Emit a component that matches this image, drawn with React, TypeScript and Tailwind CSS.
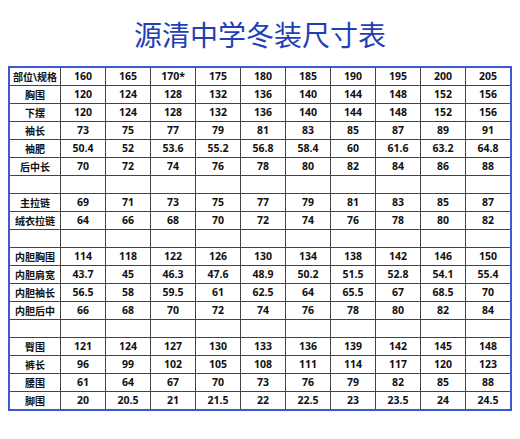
import { Fragment } from "react"

const sizes = ["160", "165", "170*", "175", "180", "185", "190", "195", "200", "205"]

// null = blank spacer row
const rows: (readonly [string, (string | number)[]] | null)[] = [
  ["胸围", [120, 124, 128, 132, 136, 140, 144, 148, 152, 156]],
  ["下摆", [120, 124, 128, 132, 136, 140, 144, 148, 152, 156]],
  ["袖长", [73, 75, 77, 79, 81, 83, 85, 87, 89, 91]],
  ["袖肥", [50.4, 52, 53.6, 55.2, 56.8, 58.4, 60, 61.6, 63.2, 64.8]],
  ["后中长", [70, 72, 74, 76, 78, 80, 82, 84, 86, 88]],
  null,
  ["主拉链", [69, 71, 73, 75, 77, 79, 81, 83, 85, 87]],
  ["绒衣拉链", [64, 66, 68, 70, 72, 74, 76, 78, 80, 82]],
  null,
  ["内胆胸围", [114, 118, 122, 126, 130, 134, 138, 142, 146, 150]],
  ["内胆肩宽", [43.7, 45, 46.3, 47.6, 48.9, 50.2, 51.5, 52.8, 54.1, 55.4]],
  ["内胆袖长", [56.5, 58, 59.5, 61, 62.5, 64, 65.5, 67, 68.5, 70]],
  ["内胆后中", [66, 68, 70, 72, 74, 76, 78, 80, 82, 84]],
  null,
  ["臀围", [121, 124, 127, 130, 133, 136, 139, 142, 145, 148]],
  ["裤长", [96, 99, 102, 105, 108, 111, 114, 117, 120, 123]],
  ["腰围", [61, 64, 67, 70, 73, 76, 79, 82, 85, 88]],
  ["脚围", ["20", "20.5", "21", "21.5", "22", "22.5", "23", "23.5", "24", "24.5"]],
]

const cell = "bg-white flex items-center justify-center h-[17px] leading-none"
const label = cell + " text-[10px]"

export default function App() {
  return (
    <div className="w-[520px] h-[439px] bg-white font-['Open_Sans','Noto_Sans_CJK_SC',sans-serif]">
      {/* title */}
      <div className="pt-[18px] h-[66px] text-center">
        <h1 className="text-[28px] leading-[32px] text-[#1f3fb5] font-['Noto_Sans_CJK_SC',sans-serif]">
          源清中学冬装尺寸表
        </h1>
      </div>

      {/* size chart */}
      <div className="ml-[8px] w-[504px] border-2 border-[#3a5bd0] bg-[#444]">
        <div className="grid grid-cols-[50px_repeat(10,1fr)] gap-px text-[10.5px] font-bold text-[#111]">
          <div className={label}>部位\规格</div>
          {sizes.map((s) => (
            <div key={s} className={cell}>
              {s}
            </div>
          ))}
          {rows.map((r, i) =>
            r === null ? (
              <Fragment key={i}>
                {Array.from({ length: 11 }).map((_, j) => (
                  <div key={j} className={cell} />
                ))}
              </Fragment>
            ) : (
              <Fragment key={i}>
                <div className={label}>{r[0]}</div>
                {r[1].map((v, j) => (
                  <div key={j} className={cell}>
                    {v}
                  </div>
                ))}
              </Fragment>
            ),
          )}
        </div>
      </div>
    </div>
  )
}
